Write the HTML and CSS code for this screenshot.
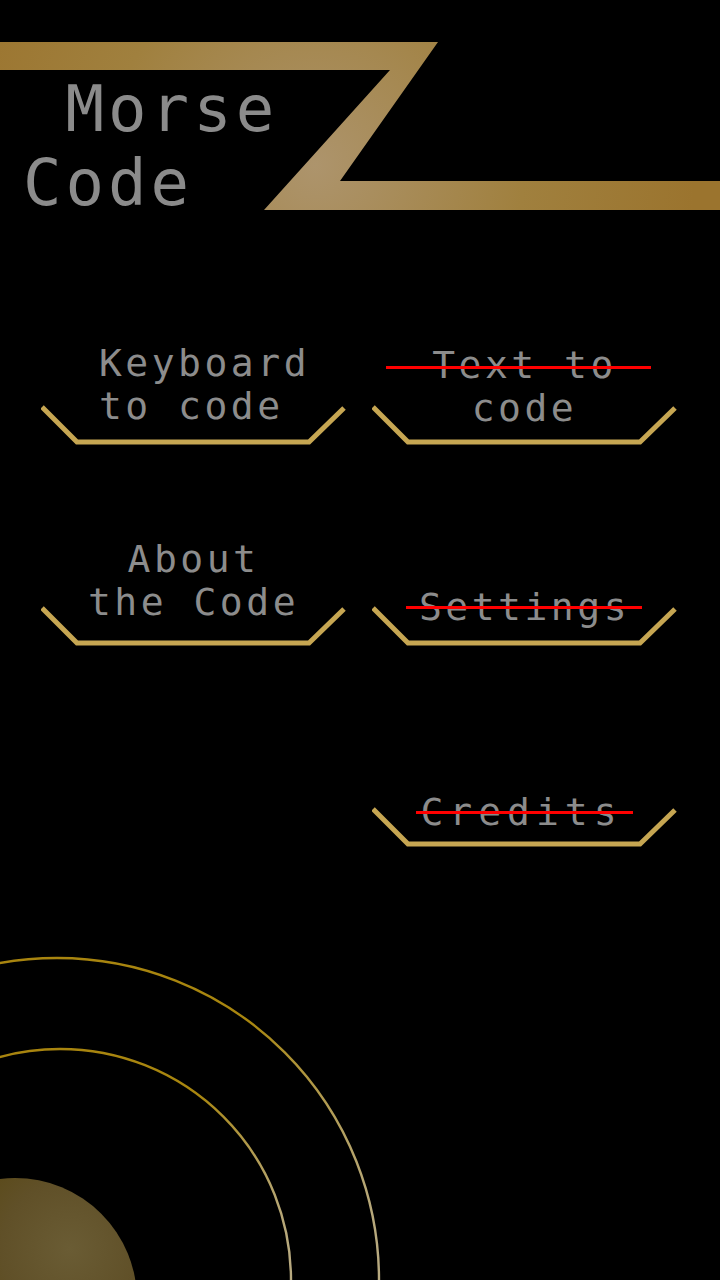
FILE: index.html
```html
<!DOCTYPE html>
<html lang="en">
<head>
<meta charset="utf-8">
<title>Morse Code</title>
<link rel="stylesheet" href="styles.css">
</head>
<body>
<div class="screen">
  <header class="hero">
    <svg class="hero-z" width="720" height="220" viewBox="0 0 720 220" aria-hidden="true">
      <defs>
        <radialGradient id="zgrad" gradientUnits="userSpaceOnUse" cx="315" cy="165" r="380">
          <stop offset="0" stop-color="#ad946c"/>
          <stop offset="0.55" stop-color="#a0803e"/>
          <stop offset="1" stop-color="#9b742e"/>
        </radialGradient>
      </defs>
      <polygon points="0,42 438,42 340,181 720,181 720,210 264,210 390,70 0,70" fill="url(#zgrad)"/>
    </svg>
    <h1 class="title"> Morse
Code</h1>
  </header>

  <nav class="menu">
    <div class="item">
      <div class="label label-shift"><span class="line">Keyboard</span><span class="line">to code&nbsp;</span></div>
      <svg class="bracket" width="305" height="42" viewBox="0 0 305 42"><polyline points="1,2 36,37 268,37 303,3"/></svg>
    </div>
    <div class="item">
      <div class="label label-low"><span class="line strike strike-text">Text to</span><span class="line">code</span></div>
      <svg class="bracket" width="305" height="42" viewBox="0 0 305 42"><polyline points="1,2 36,37 268,37 303,3"/></svg>
    </div>
    <div class="item">
      <div class="label label-up"><span class="line">About</span><span class="line">the Code</span></div>
      <svg class="bracket" width="305" height="42" viewBox="0 0 305 42"><polyline points="1,2 36,37 268,37 303,3"/></svg>
    </div>
    <div class="item">
      <div class="label"><span class="line strike strike-settings">Settings</span></div>
      <svg class="bracket" width="305" height="42" viewBox="0 0 305 42"><polyline points="1,2 36,37 268,37 303,3"/></svg>
    </div>
    <div class="item item-empty"></div>
    <div class="item">
      <div class="label label-down label-wide"><span class="line strike strike-credits">Credits</span></div>
      <svg class="bracket" width="305" height="42" viewBox="0 0 305 42"><polyline points="1,2 36,37 268,37 303,3"/></svg>
    </div>
  </nav>

  <svg class="rings" width="400" height="431" viewBox="0 0 400 431" aria-hidden="true">
    <defs>
      <linearGradient id="ringgrad" x1="0" y1="0" x2="1" y2="0">
        <stop offset="0" stop-color="#b6ac92"/>
        <stop offset="0.3" stop-color="#a8840f"/>
        <stop offset="0.8" stop-color="#a8860f"/>
        <stop offset="1" stop-color="#b8aa80"/>
      </linearGradient>
      <radialGradient id="dotgrad" gradientUnits="userSpaceOnUse" cx="70" cy="400" r="125">
        <stop offset="0" stop-color="#6a5c34"/>
        <stop offset="0.55" stop-color="#605028"/>
        <stop offset="1" stop-color="#594814"/>
      </radialGradient>
      <linearGradient id="dotshade" x1="0" y1="0" x2="1" y2="0">
        <stop offset="0" stop-color="#5a4200" stop-opacity="1"/>
        <stop offset="0.35" stop-color="#5a4200" stop-opacity="0"/>
        <stop offset="1" stop-color="#5a4200" stop-opacity="0"/>
      </linearGradient>
    </defs>
    <circle cx="57" cy="431" r="322" fill="none" stroke="url(#ringgrad)" stroke-width="2.4"/>
    <circle cx="60" cy="431" r="231" fill="none" stroke="url(#ringgrad)" stroke-width="2.4"/>
    <circle cx="15" cy="451" r="122" fill="url(#dotgrad)"/>
    <circle cx="15" cy="451" r="122" fill="url(#dotshade)"/>
  </svg>
</div>
</body>
</html>
```

FILE: styles.css
```css
* {
  box-sizing: border-box;
}

html, body {
  margin: 0;
  padding: 0;
  background: #000;
}

.screen {
  width: 720px;
  height: 1280px;
  overflow: hidden;
  background: #000;
  display: flex;
  flex-direction: column;
  font-family: "DejaVu Sans Mono", "Liberation Mono", monospace;
}

.hero {
  position: relative;
  height: 220px;
  flex: none;
}

.hero-z {
  position: absolute;
  left: 0;
  top: 0;
  display: block;
}

.title {
  position: relative;
  margin: 0;
  padding: 72px 0 0 23px;
  font-size: 64px;
  line-height: 74px;
  font-weight: normal;
  letter-spacing: 4px;
  color: #8b8b8b;
  white-space: pre;
}

.menu {
  flex: none;
  margin-top: 26px;
  padding-left: 42px;
  display: grid;
  grid-template-columns: 303px 303px;
  grid-auto-rows: 201px;
  column-gap: 28px;
}

.item {
  display: flex;
  flex-direction: column;
  align-items: center;
  justify-content: flex-end;
}

.label {
  display: flex;
  flex-direction: column;
  align-items: center;
  font-size: 38px;
  line-height: 43px;
  letter-spacing: 3.5px;
  color: #8c8c8c;
  white-space: pre;
  position: relative;
  z-index: 1;
}

.label-shift {
  padding-left: 22px;
}

.label-low {
  margin-bottom: -2px;
}

.label-up {
  margin-bottom: 5px;
}

.label-down {
  margin-bottom: -4px;
}

.label-wide {
  letter-spacing: 6px;
  padding-right: 6px;
}

.line {
  display: block;
}

.strike {
  position: relative;
}

.strike::after {
  content: "";
  position: absolute;
  height: 3px;
  background: #ff0000;
}

.strike-text::after {
  left: -46px;
  right: -34px;
  top: 22px;
}

.strike-settings::after {
  left: -13px;
  right: -12px;
  top: 20px;
}

.strike-credits::after {
  left: -4px;
  right: -10px;
  top: 20px;
}

.bracket {
  display: block;
  flex: none;
  margin-top: -23px;
}

.bracket polyline {
  fill: none;
  stroke: #c6a652;
  stroke-width: 5;
  stroke-linejoin: miter;
}

.rings {
  display: block;
  flex: none;
  margin-top: auto;
}
```
